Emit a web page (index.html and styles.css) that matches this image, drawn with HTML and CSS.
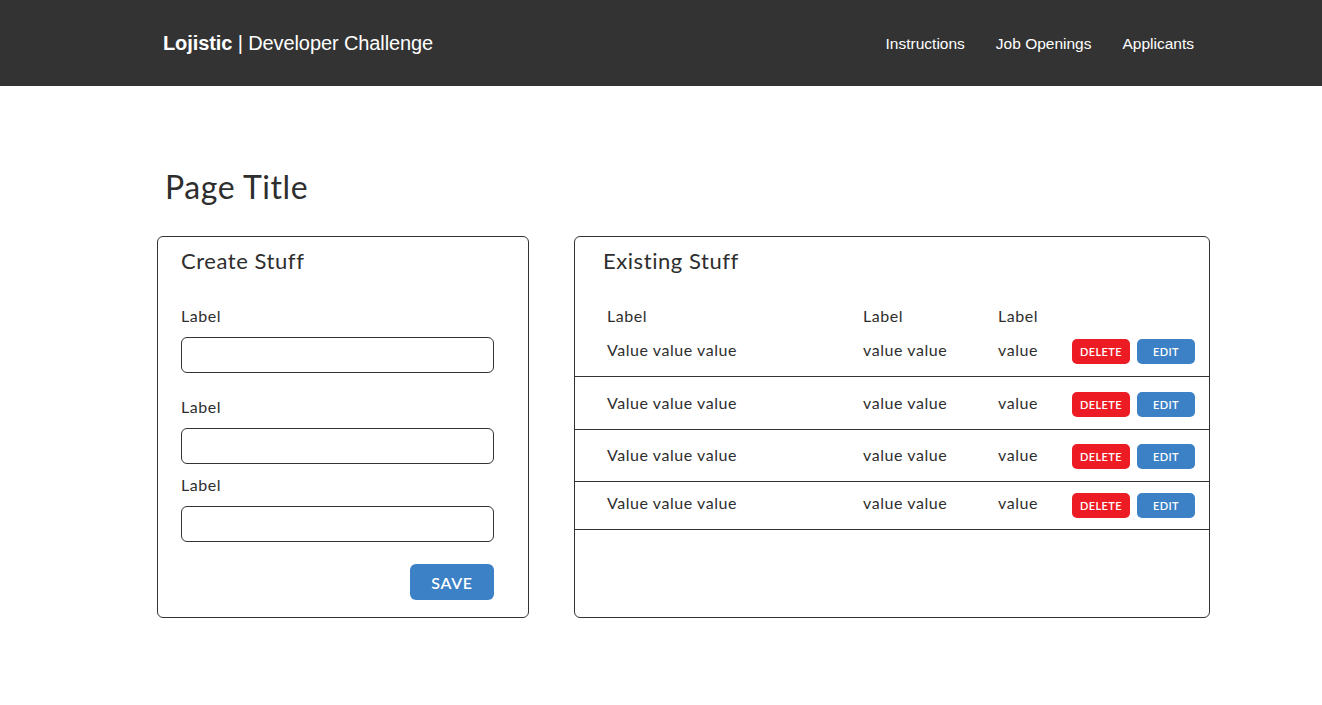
FILE: index.html
```html
<!DOCTYPE html>
<html lang="en">
<head>
<meta charset="utf-8">
<title>Lojistic | Developer Challenge</title>
<link rel="stylesheet" href="styles.css">
</head>
<body>
<header class="topbar">
  <div class="brand"><strong>Lojistic</strong> | Developer Challenge</div>
  <nav class="nav">
    <a href="#">Instructions</a>
    <a href="#">Job Openings</a>
    <a href="#">Applicants</a>
  </nav>
</header>
<main class="main">
  <h1 class="page-title">Page Title</h1>
  <div class="cards">
    <section class="card card-create">
      <h2 class="card-title">Create Stuff</h2>
      <form class="form">
        <label class="field field-first"><span class="field-label">Label</span><input class="input" type="text"></label>
        <label class="field field-second"><span class="field-label">Label</span><input class="input" type="text"></label>
        <label class="field field-third"><span class="field-label">Label</span><input class="input" type="text"></label>
        <div class="form-actions"><button type="button" class="btn-save">SAVE</button></div>
      </form>
    </section>
    <section class="card card-list">
      <h2 class="card-title card-title-list">Existing Stuff</h2>
      <div class="row row-head">
        <span>Label</span><span>Label</span><span>Label</span><span></span>
      </div>
      <div class="row row-1">
        <span class="cell">Value value value</span><span class="cell">value value</span><span class="cell">value</span>
        <span class="actions"><button class="btn btn-delete">DELETE</button><button class="btn btn-edit">EDIT</button></span>
      </div>
      <div class="row row-2">
        <span class="cell">Value value value</span><span class="cell">value value</span><span class="cell">value</span>
        <span class="actions"><button class="btn btn-delete">DELETE</button><button class="btn btn-edit">EDIT</button></span>
      </div>
      <div class="row row-3">
        <span class="cell">Value value value</span><span class="cell">value value</span><span class="cell">value</span>
        <span class="actions"><button class="btn btn-delete">DELETE</button><button class="btn btn-edit">EDIT</button></span>
      </div>
      <div class="row row-4">
        <span class="cell cell-low">Value value value</span><span class="cell cell-low">value value</span><span class="cell cell-low">value</span>
        <span class="actions"><button class="btn btn-delete">DELETE</button><button class="btn btn-edit">EDIT</button></span>
      </div>
    </section>
  </div>
</main>
</body>
</html>
```
FILE: styles.css
```css
* { box-sizing: border-box; }
html, body { margin: 0; padding: 0; background: #fff; }
body { font-family: "Lato", "Liberation Sans", sans-serif; color: #2e2e2e; letter-spacing: 0.035em; }

.topbar {
  height: 86px;
  background: #333333;
  display: flex;
  align-items: center;
  justify-content: space-between;
  padding: 0 128px 0 163px;
  font-family: "Liberation Sans", Arial, sans-serif;
  color: #fff;
  letter-spacing: 0;
}
.brand { font-size: 20px; letter-spacing: -0.1px; }
.brand strong { font-weight: bold; }
.nav { display: flex; gap: 31px; padding-top: 2px; }
.nav a { color: #fff; text-decoration: none; font-size: 15.5px; }

.main { padding: 0 0 0 157px; width: 1210px; }
.page-title {
  margin: 0;
  padding: 81px 0 0 8px;
  font-size: 32px;
  font-weight: 400;
  line-height: 40px;
  height: 150px;
}
.cards { display: flex; gap: 45px; align-items: flex-start; }
.card {
  border: 1px solid #333;
  border-radius: 6px;
  height: 382px;
}
.card-create { width: 372px; padding: 11px 34px 0 23px; }
.card-list { width: 636px; padding-top: 11px; }
.card-title {
  margin: 0;
  font-size: 22px;
  font-weight: 400;
  line-height: 26px;
}
.card-title-list { padding-left: 28px; }

.form { display: flex; flex-direction: column; }
.field { display: flex; flex-direction: column; }
.field-label { font-size: 16px; line-height: 20px; margin-bottom: 11px; }
.field-first { margin-top: 32px; }
.field-second { margin-top: 24px; }
.field-third { margin-top: 11px; }
.input {
  height: 36px;
  width: 313px;
  border: 1px solid #333;
  border-radius: 6px;
  font: inherit;
  outline: none;
}
.form-actions { display: flex; justify-content: flex-end; margin-top: 22px; }
.btn-save {
  width: 84px;
  height: 36px;
  border: 0;
  border-radius: 6px;
  background: #3c80c6;
  color: #fff;
  font-family: "Lato", sans-serif;
  font-size: 16px;
  font-weight: 600;
  letter-spacing: 0.04em;
  padding: 0;
}

.row {
  display: grid;
  grid-template-columns: 256px 135px 74px 123px;
  align-items: center;
  padding: 0 16px 0 32px;
  font-size: 16px;
}
.row-head { margin-top: 32px; line-height: 20px; }
.row-1 { height: 51px; border-bottom: 1px solid #333; }
.row-2 { height: 53px; padding-top: 2px; border-bottom: 1px solid #333; }
.row-3 { height: 52px; padding-top: 2px; border-bottom: 1px solid #333; }
.row-4 { height: 48px; border-bottom: 1px solid #333; }
.cell { padding-bottom: 4px; }
.cell-low { padding-bottom: 6px; }
.actions { display: flex; gap: 7px; }
.btn {
  width: 58px;
  height: 25px;
  border: 0;
  border-radius: 5px;
  color: #fff;
  font-family: "Lato", sans-serif;
  font-size: 11px;
  font-weight: 600;
  letter-spacing: 0.04em;
  padding: 0;
}
.btn-delete { background: #ed1c24; }
.btn-edit { background: #3c80c6; }
```
